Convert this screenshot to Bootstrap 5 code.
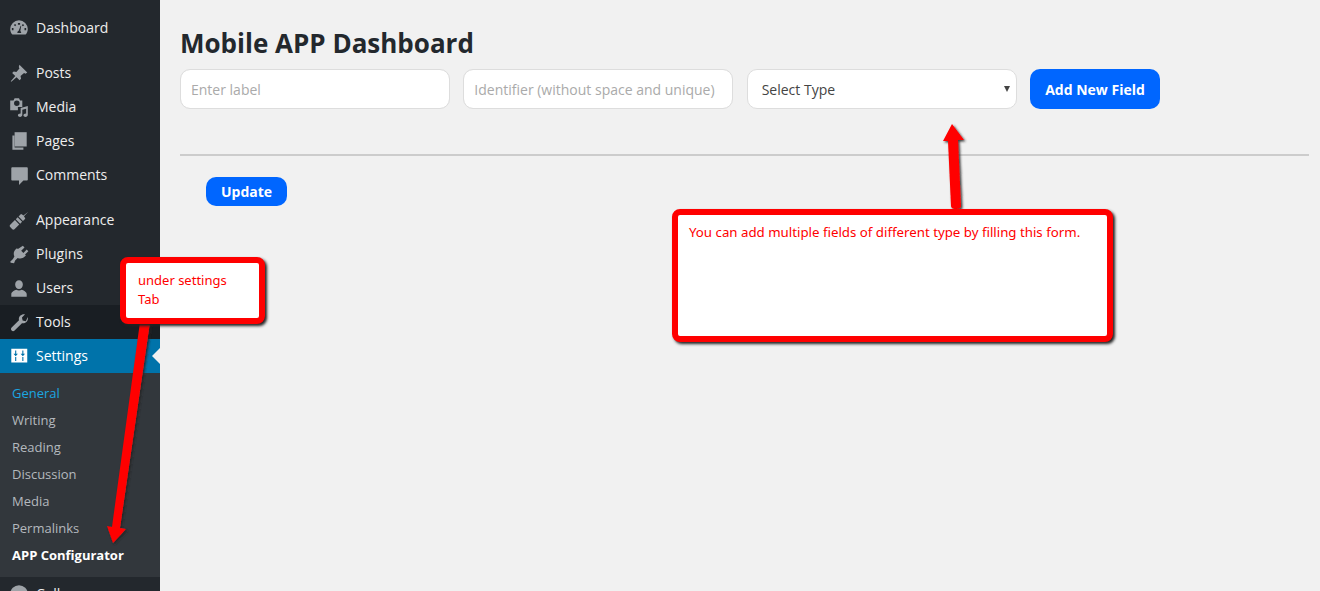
<!DOCTYPE html>
<html lang="en">
<head>
<meta charset="utf-8">
<title>Mobile APP Dashboard</title>
<link rel="stylesheet" href="https://cdn.jsdelivr.net/npm/bootstrap@5.3.0/dist/css/bootstrap.min.css">
<style>
html,body{height:591px;overflow:hidden}
body{background:#f1f1f1;font-family:"Open Sans",sans-serif;color:#212529;position:relative}
.wp-side{width:160px;height:591px;background:#23282d;padding-top:11px;flex:none;overflow:hidden}
.wp-item{height:34px;color:#eee;font-size:14px;padding:0 0 2px 36px;position:relative;display:flex;align-items:center}
.wp-item svg{position:absolute;left:8px;top:6px;width:22px;height:22px;fill:#9ea3a8}
.wp-gap{margin-top:11px}
.wp-tools{background:#191e23}
.wp-set{background:#0073aa;color:#fff}
.wp-set svg{fill:#fff}
.wp-set::after{content:"";position:absolute;right:0;top:9px;border:8px solid transparent;border-right-color:#f1f1f1;border-left-width:0}
.wp-sub{background:#32373c;padding:7px 0 8px}
.wp-sub div{height:27px;font-size:13px;padding-left:12px;color:#b4b9be;display:flex;align-items:center}
.wp-sub .on{color:#1ba6e0}
.wp-sub .cur{color:#fff;font-weight:700}
.wp-main{padding:0 11px 0 20px;flex:1;min-width:0}
.pg-title{font-size:26px;font-weight:700;line-height:36px;margin:25px 0 8px;color:#23282d}
.entry-row{gap:13.33px}
.fld{width:270px;height:40px;border-radius:10px;border:1px solid #ddd;font-size:14px;padding:0 10px;background-color:#fff;flex:none}
.fld::placeholder{color:#aaa;opacity:1}
select.fld{padding:0 14px;color:#444;appearance:none;background-image:none}
.sel-wrap{position:relative;flex:none}
.sel-wrap::after{content:"";position:absolute;right:7px;top:17px;border:3px solid transparent;border-top:6px solid #444;border-bottom:0}
.btn-add{background:#06f;color:#fff;font-weight:700;font-size:14px;width:130px;height:40px;border-radius:10px;border:0;padding:0}
.btn-add:hover{background:#06f;color:#fff}
.btn-upd{background:#06f;color:#fff;font-weight:700;font-size:14px;width:81px;height:29px;border-radius:10px;border:0;padding:0;margin-left:26px}
.btn-upd:hover{background:#06f;color:#fff}
.rule{height:2px;background:#ccc;border:0;opacity:1;margin:45px 0 21px}
.note{position:absolute;background:#fff;border:6px solid #f00;border-radius:8px;box-shadow:2px 2px 3px #222;color:#f00;font-size:13px;font-family:"Noto Sans","Open Sans",sans-serif;line-height:19px}
.note-a{left:672px;top:209px;width:441px;height:133px;padding:8px 11px;font-size:13.27px}
.note-b{left:120px;top:257px;width:145px;height:67px;padding:8px 12px}
.arrows{position:absolute;left:0;top:0;width:1320px;height:591px;pointer-events:none}
</style>
</head>
<body>
<div class="d-flex">
  <nav class="wp-side">
    <div class="wp-item"><svg viewBox="0 0 20 20"><path d="M10 3a8 8 0 0 0-8 8c0 2 .7 3.800 2 5h12c1.300-1.200 2-3 2-5a8 8 0 0 0-8-8zM5 12H3.500v-2H5zm1.500-3.500L5.300 7.300l1.100-1 1.100 1zM9 5.500h2V7H9zm2.500 9h-3c0-1 .6-1.700 1.200-1.900L11.500 8l.5.200-.8 4.500c.3.300.8 1 .8 1.800zM13.500 8.500l-1-1.100 1.100-1.100 1.100 1.100zM16.500 12H15v-2h1.500z" fill-rule="evenodd"/></svg>Dashboard</div>
    <div class="wp-item wp-gap"><svg viewBox="0 0 20 20"><path d="M10.400 2.500 17.500 9.600l-1.600 1-1.300-.6-3.200 2.800.5 2.400-1.400 1.400-2.700-2.800L3 18l-.5-.5 4.100-4.800-2.800-2.700L5.200 8.600l2.400.5 2.800-3.200-.6-1.300z"/></svg>Posts</div>
    <div class="wp-item"><svg viewBox="0 0 20 20"><path fill-rule="evenodd" d="M2 4h3l1-2h4l1 2h2v6H9v3H2zm6 5a2.500 2.500 0 1 0 0-5 2.500 2.500 0 0 0 0 5z"/><path d="M18 9v8c0 1.200-1 2-2 2s-2-.6-2-1.500.8-1.700 2.500-1.700v-4.300l-3.500 1V17c0 1.200-1 2-2 2s-2-.6-2-1.500.8-1.700 2.500-1.700v-4.800z"/></svg>Media</div>
    <div class="wp-item"><svg viewBox="0 0 20 20"><path d="M6 2h11v13H6z"/><path d="M4 5v13h10v-2H6V5z"/></svg>Pages</div>
    <div class="wp-item"><svg viewBox="0 0 20 20"><path d="M4 3h13c.6 0 1 .4 1 1v10c0 .6-.4 1-1 1h-3l-4 4v-4H4c-.6 0-1-.4-1-1V4c0-.6.4-1 1-1z"/></svg>Comments</div>
    <div class="wp-item wp-gap"><svg viewBox="0 0 20 20"><path d="M18.500 2.500 14 5.800c-.8-.6-1.500-1.100-2.200-1.200L9.600 6.800l4 4 2.100-2c-.2-.8-.7-1.600-1.200-2.300zM8.800 7.600l-1.700 1.700 4 4 1.700-1.700zM6.300 10.100 2 14.400c-.6.600-.6 1.400 0 2l1.900 1.900c.6.600 1.400.6 2 0l4.300-4.300z"/></svg>Appearance</div>
    <div class="wp-item"><svg viewBox="0 0 20 20"><path d="M13.500 2.500 15 4l-3 3 2 2 3-3 1.500 1.500-3 3 .8.800-1.300 1.300c-1.700 1.700-4.200 2-6.200 1L6.500 16l-1 2.500-3-.5L2 17l2.500-2.500 1.300-2.300c-1-2-.7-4.500 1-6.200L8.100 4.700l.9.800z"/></svg>Plugins</div>
    <div class="wp-item"><svg viewBox="0 0 20 20"><path d="M10 3c2 0 3.500 1.600 3.500 3.800S12 11 10 11 6.500 9 6.500 6.800 8 3 10 3zM3 15.500C3 13.500 6 12 7.500 11.500c1.500 1 3.500 1 5 0 1.500.5 4.500 2 4.500 4V18H3z"/></svg>Users</div>
    <div class="wp-item wp-tools"><svg viewBox="0 0 20 20"><path d="M18 5.500c.4 1.700-.1 3.400-1.300 4.500-1.100 1-2.600 1.400-4 1.100L6 17.800c-.8.800-2 .8-2.700 0-.8-.7-.8-1.900 0-2.700L10 8.400c-.4-1.400 0-3 1-4C12.200 3.200 14 2.600 15.500 3l-2.800 2.800.6 2.900 2.900.6z"/></svg>Tools</div>
    <div class="wp-item wp-set"><svg viewBox="0 0 20 20"><path fill-rule="evenodd" d="M3 3.500h14.500V16H3zM6.500 5v3H5l2 2.200L9 8H7.500V5zM7.500 11h-1v3.500h1zM13 11v3.500h1V11zM13 5v3h-1.500l2 2.200L15.500 8H14V5z"/></svg>Settings</div>
    <div class="wp-sub">
      <div class="on">General</div>
      <div>Writing</div>
      <div>Reading</div>
      <div>Discussion</div>
      <div>Media</div>
      <div>Permalinks</div>
      <div class="cur">APP Configurator</div>
    </div>
    <div class="wp-item"><svg viewBox="0 0 20 20"><circle cx="10" cy="10" r="8"/></svg>Collapse menu</div>
  </nav>
  <main class="wp-main">
    <h1 class="pg-title">Mobile APP Dashboard</h1>
    <form class="d-flex align-items-center entry-row">
      <input class="fld form-control" placeholder="Enter label">
      <input class="fld form-control" placeholder="Identifier (without space and unique)">
      <div class="sel-wrap"><select class="fld form-select"><option>Select Type</option></select></div>
      <button type="button" class="btn btn-add">Add New Field</button>
    </form>
    <hr class="rule">
    <button type="button" class="btn btn-upd">Update</button>
  </main>
</div>
<svg class="arrows" viewBox="0 0 1320 591">
  <defs><filter id="sh" x="-30%" y="-30%" width="160%" height="160%"><feDropShadow dx="1.500" dy="1.500" stdDeviation="1" flood-color="#222" flood-opacity=".9"/></filter></defs>
  <path filter="url(#sh)" fill="#f00" d="M140 322 L150 322 L120 528 L126 529 L113 543 L107 526 L112 527 Z"/>
  <path filter="url(#sh)" fill="#f00" d="M952 124 L964 140 L958 140 L961 206 Q961 209 956 209 Q951 209 951 206 L948 141 L943 141 Z"/>
</svg>
<div class="note note-a">You can add multiple fields of different type by filling this form.</div>
<div class="note note-b">under settings<br>Tab</div>
<script src="https://cdn.jsdelivr.net/npm/bootstrap@5.3.0/dist/js/bootstrap.bundle.min.js"></script>
</body>
</html>
